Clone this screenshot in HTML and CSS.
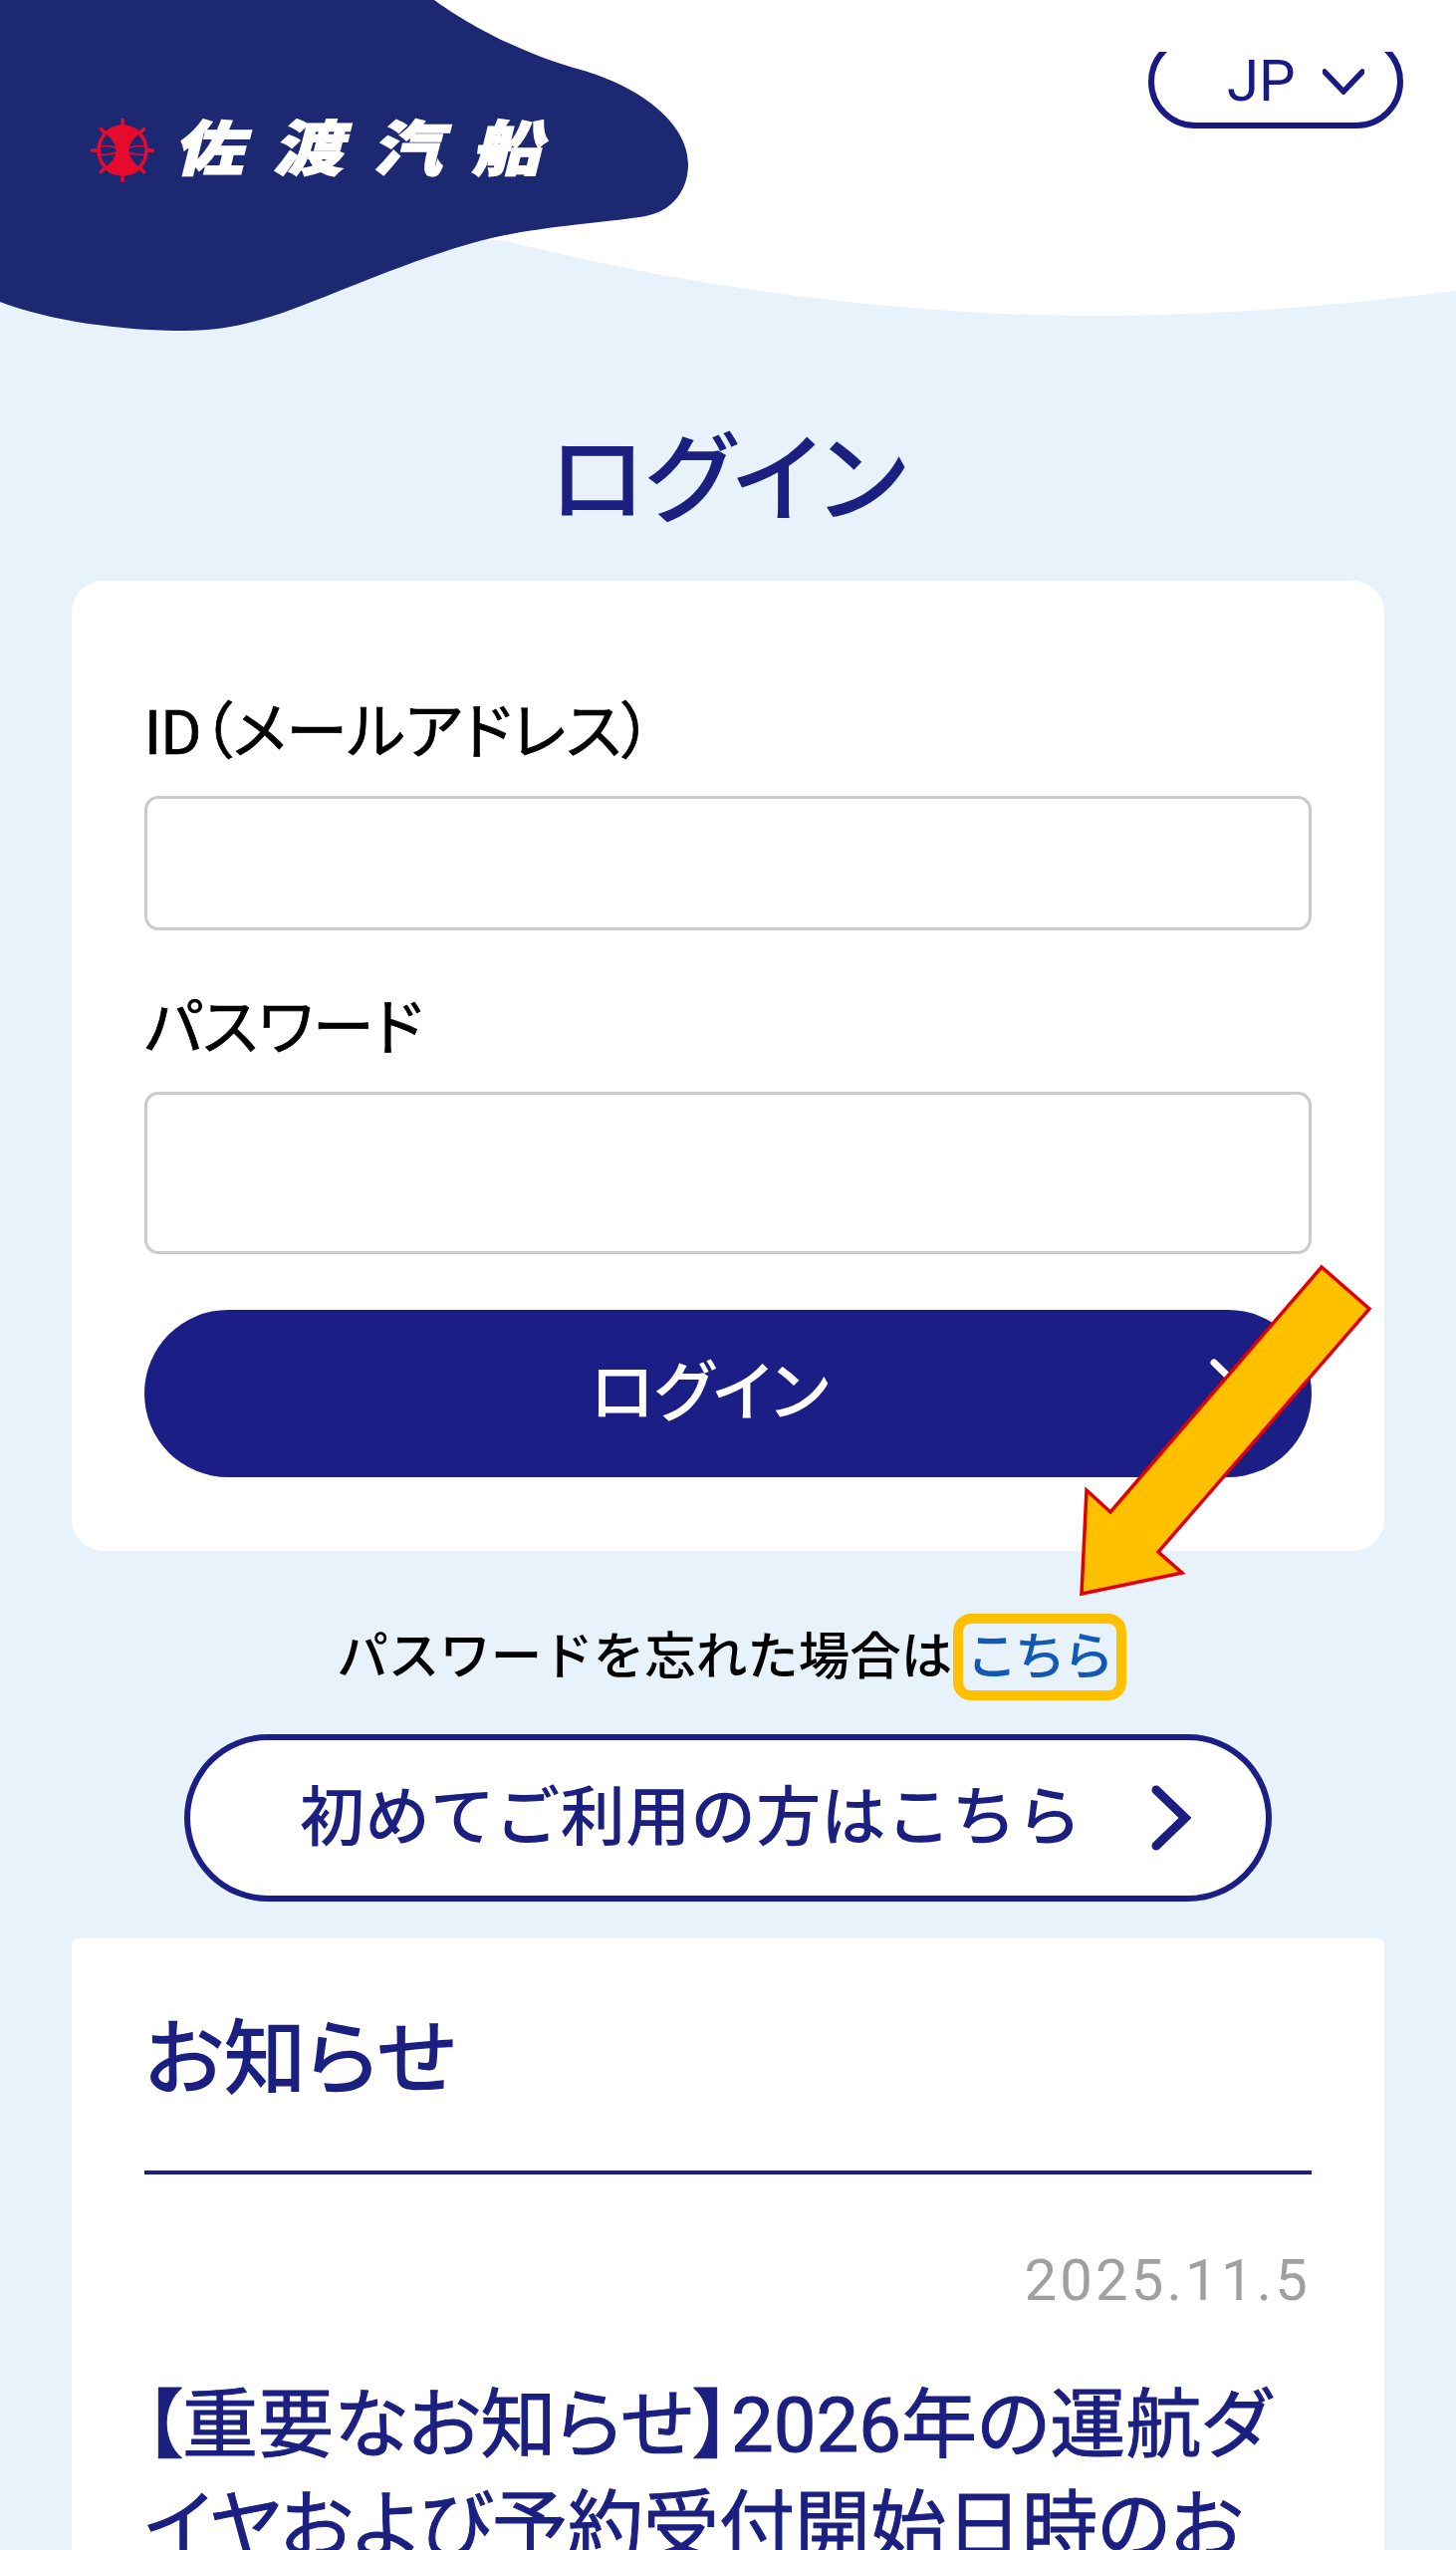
FILE: index.html
```html
<!DOCTYPE html>
<html lang="ja">
<head>
<meta charset="utf-8">
<title>ログイン</title>
<link rel="stylesheet" href="styles.css">
</head>
<body>
<div class="page">
  <header class="header">
    <svg class="header-bg" viewBox="0 0 1462 340" width="1462" height="340" aria-hidden="true">
      <path class="wave-white" d="M0 0H1462V292C1320 310 1190 318 1081 317C900 315 700 290 508 242L0 200Z"/>
      <path class="wave-navy" d="M0 0H436C455 14 510 50 583 70C640 86 691 122 691 165C691 190 676 212 648 217C620 222 560 226 513 235C460 245 400 268 326 298C280 316 240 332 186 332C120 332 50 322 0 303Z"/>
    </svg>
    <a class="logo">
      <svg class="emblem" viewBox="0 0 64 64" width="64" height="64" aria-hidden="true">
        <g class="emblem-spokes">
          <circle cx="32" cy="32" r="24"/>
          <path d="M32 1.500V8M32 56V62.500M1.500 32H8M56 32H62.500M10.400 10.400L15 15M49 49L53.600 53.600M53.600 10.400L49 15M15 49L10.400 53.600"/>
        </g>
        <path class="emblem-lines" d="M9 28Q20 26 29 31M9 36Q20 37 29 33M55 28Q44 26 35 31M55 36Q44 37 35 33"/>
        <path class="emblem-core" d="M15 15C22 7 42 7 49 15C42 21 38.500 26 38.500 32C38.500 38 42 43 49 49C42 57 22 57 15 49C22 43 25.500 38 25.500 32C25.500 26 22 21 15 15Z"/>
      </svg>
      <span class="logo-text">佐渡汽船</span>
    </a>
    <div class="lang-clip">
      <div class="lang">
        <span class="lang-text">JP</span>
        <svg class="lang-chevron" viewBox="0 0 42 26" width="42" height="26" aria-hidden="true"><path d="M2 3L21 23L40 3"/></svg>
      </div>
    </div>
  </header>

  <main class="main">
    <h1 class="title">ログイン</h1>

    <form class="card">
      <label class="label label-id">ID（メールアドレス）</label>
      <div class="input input-id"></div>
      <label class="label label-pass">パスワード</label>
      <div class="input input-pass"></div>
      <div class="submit">
        <span class="submit-text">ログイン</span>
        <svg class="submit-chevron" viewBox="0 0 40 70" width="40" height="70" aria-hidden="true"><path d="M4 4L36 35L4 66"/></svg>
      </div>
    </form>

    <p class="forgot">パスワードを忘れた場合は<a class="forgot-link">こちら</a></p>

    <div class="first-wrap">
      <a class="first">
        <span class="first-text">初めてご利用の方はこちら</span>
        <svg class="first-chevron" viewBox="0 0 40 66" width="40" height="66" aria-hidden="true"><path d="M5 5L34 33L5 61"/></svg>
      </a>
    </div>

    <section class="news">
      <h2 class="news-title">お知らせ</h2>
      <p class="news-date">2025.11.5</p>
      <h3 class="news-head">【重要なお知らせ】2026年の運航ダイヤおよび予約受付開始日時のお</h3>
    </section>
  </main>

  <svg class="callout" viewBox="0 0 320 350" width="320" height="350" aria-hidden="true">
    <polygon points="16,335 21,231 45,253 257,7 305,49 93,293 117,314"/>
  </svg>
</div>
</body>
</html>
```

FILE: styles.css
```css
* { box-sizing: border-box; }
html, body { margin: 0; padding: 0; }
body {
  background: #e7f2fb;
  font-family: Roboto, "Noto Sans CJK JP", sans-serif;
  color: #000;
  font-feature-settings: "palt";
}
.page {
  position: relative;
  width: 1462px;
  height: 2560px;
  overflow: hidden;
}

/* header */
.header {
  position: relative;
  height: 400px;
  padding: 52px 53px 0 91px;
  display: flex;
  justify-content: space-between;
  align-items: flex-start;
}
.header-bg { position: absolute; left: 0; top: 0; }
.wave-white { fill: #fff; }
.wave-navy { fill: #1c2972; }
.logo {
  position: relative;
  display: flex;
  align-items: center;
  margin-top: 61px;
}
.emblem-spokes { fill: none; stroke: #e60a2d; stroke-width: 3.5; stroke-linecap: round; }
.emblem-lines { fill: none; stroke: #e60a2d; stroke-width: 1.5; }
.emblem-core { fill: #e60a2d; }
.logo-text {
  margin-left: 26px;
  margin-bottom: 12px;
  font-family: "Noto Sans CJK JP", sans-serif;
  font-size: 60px;
  font-weight: 900;
  line-height: 64px;
  letter-spacing: 26px;
  color: #fff;
  -webkit-text-stroke: 1.5px #fff;
  font-feature-settings: normal;
  white-space: nowrap;
  transform-origin: left center;
  transform: skewX(-14deg) scaleX(1.16);
}
.lang-clip {
  position: relative;
  width: 256px;
  height: 77px;
  overflow: hidden;
}
.lang {
  width: 256px;
  height: 94px;
  margin-top: -17px;
  padding: 0 32px 0 73px;
  border: 6px solid #1a1a85;
  border-radius: 47px;
  display: flex;
  align-items: center;
  gap: 27px;
  background: #fff;
}
.lang-text {
  margin-bottom: 3px;
  font-size: 58px;
  font-weight: 400;
  line-height: 50px;
  color: #1a1a85;
}
.lang-chevron path { fill: none; stroke: #1a1a85; stroke-width: 5.5; stroke-linecap: round; stroke-linejoin: miter; }

/* main */
.main { padding: 0 72px; }
.title {
  margin: 28px 0 0;
  height: 155px;
  text-align: center;
  font-size: 98px;
  font-weight: 500;
  line-height: 110px;
  color: #1b2080;
}

/* login card */
.card {
  display: flex;
  flex-direction: column;
  height: 974px;
  padding: 0 73px;
  background: #fff;
  border-radius: 32px;
}
.label {
  font-size: 62px;
  font-weight: 400;
  -webkit-text-stroke: .7px #000;
  line-height: 70px;
  color: #000;
}
.label-id { margin-top: 118px; }
.label-pass { margin-top: 64px; }
.input {
  border: 3px solid #cbcbcb;
  border-radius: 14px;
  background: #fff;
}
.input-id { height: 135px; margin-top: 28px; }
.input-pass { height: 163px; margin-top: 28px; }
.submit {
  margin-top: 56px;
  height: 168px;
  padding: 0 62px 0 65px;
  display: grid;
  grid-template-columns: 1fr auto;
  align-items: center;
  background: #1b1f85;
  border-radius: 84px;
}
.submit-text {
  text-align: center;
  font-size: 65.500px;
  font-weight: 500;
  line-height: 80px;
  color: #fff;
}
.submit-chevron path { fill: none; stroke: #fff; stroke-width: 7; stroke-linecap: round; }

/* forgot */
.forgot {
  margin: 64px 0 0;
  text-align: center;
  font-size: 51.500px;
  font-weight: 500;
  line-height: 86px;
  font-feature-settings: normal;
}
.forgot-link {
  position: relative;
  padding: 0 8px;
  margin-left: 6px;
  letter-spacing: -3px;
  color: #1059b5;
}
.forgot-link::after {
  content: "";
  position: absolute;
  left: -5px;
  right: -7px;
  top: -13px;
  bottom: -13px;
  border: 10px solid #ffc000;
  border-radius: 18px;
}

/* first-use button */
.first-wrap { margin-top: 34px; padding: 0 113px; }
.first {
  height: 168px;
  padding-left: 110px;
  display: flex;
  align-items: center;
  gap: 70px;
  background: #fff;
  border: 6px solid #1b1f85;
  border-radius: 84px;
}
.first-text {
  font-size: 65px;
  font-weight: 500;
  line-height: 80px;
  letter-spacing: .45px;
  color: #1b2080;
  font-feature-settings: normal;
  white-space: nowrap;
}
.first-chevron path { fill: none; stroke: #1b2080; stroke-width: 9; stroke-linecap: round; }

/* news */
.news {
  margin-top: 37px;
  height: 700px;
  padding: 0 73px;
  background: #fff;
  border-radius: 6px 6px 0 0;
}
.news-title {
  margin: 0;
  padding: 67px 0 57px;
  border-bottom: 4px solid #1b1f85;
  font-size: 83px;
  font-weight: 500;
  line-height: 109px;
  color: #1b2080;
}
.news-date {
  margin: 72px 0 0;
  padding-right: 1px;
  text-align: right;
  font-size: 58px;
  font-weight: 400;
  line-height: 68px;
  letter-spacing: 3.200px;
  color: #a0a0a0;
}
.news-head {
  margin: 61px 0 0;
  font-size: 76px;
  font-weight: 400;
  -webkit-text-stroke: 1px #1b2080;
  line-height: 102px;
  color: #1b2080;
}

/* arrow annotation */
.callout { position: absolute; left: 1070px; top: 1265px; }
.callout polygon { fill: #ffc000; stroke: #e00000; stroke-width: 3.5; }
```
